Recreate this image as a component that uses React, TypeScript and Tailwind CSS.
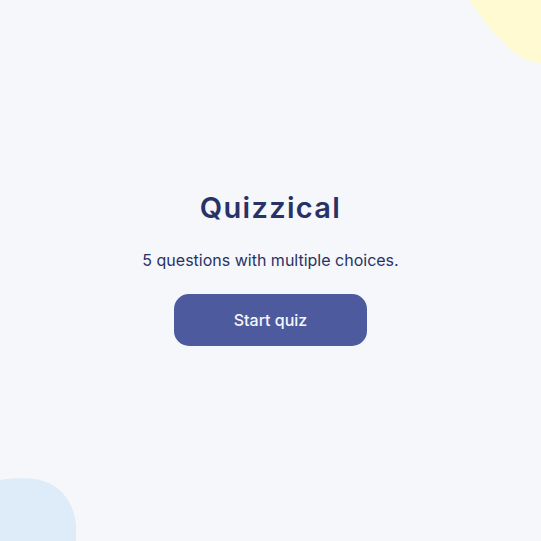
export default function App() {
  return (
    <main className="relative flex h-screen w-full flex-col items-center justify-center overflow-hidden bg-[#F5F7FB] pb-[3px] font-['Inter',sans-serif] text-[#293264]">
      {/* decorative blobs */}
      <svg
        className="pointer-events-none absolute right-0 top-0"
        width="72"
        height="64"
        viewBox="0 0 72 64"
      >
        <path d="M0 0 C14 20 24 33 38 46 C50 57 60 62 72 63 L72 0 Z" fill="#FFFAD1" />
      </svg>
      <svg
        className="pointer-events-none absolute bottom-0 left-0"
        width="77"
        height="63"
        viewBox="0 0 77 63"
      >
        <path d="M0 2 C12 0 24 0 34 1 C58 4 74 22 76 48 L76 63 L0 63 Z" fill="#DEEBF8" />
      </svg>

      <h1 className="text-[29px] font-semibold leading-none tracking-[0.045em]">Quizzical</h1>
      <p className="mt-[30px] text-base leading-none">5 questions with multiple choices.</p>
      <button className="mt-[26px] h-[52px] w-[193px] rounded-[15px] bg-[#4D5B9E] text-base font-medium text-[#F5F7FB]">
        Start quiz
      </button>
    </main>
  );
}
